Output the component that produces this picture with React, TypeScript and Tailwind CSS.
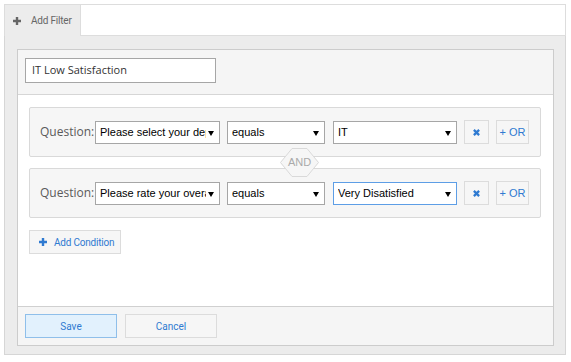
const BLUE = "#2f7ad1";

const PlusIcon = ({ color, size }: { color: string; size: number }) => (
  <svg width={size} height={size} viewBox="0 0 8 8">
    <path d="M4 0v8M0 4h8" stroke={color} strokeWidth="2.4" />
  </svg>
);

const TimesIcon = () => (
  <svg width="7" height="7" viewBox="0 0 8 8">
    <path d="M1 1l6 6M7 1l-6 6" stroke={BLUE} strokeWidth="2.6" />
  </svg>
);

const Select = ({
  text,
  width,
  focused,
}: {
  text: string;
  width: string;
  focused?: boolean;
}) => (
  <div
    className={`relative h-[23px] ${width} shrink-0 border ${
      focused ? "border-[#5d9ee6]" : "border-[#a6a6a6]"
    } bg-white flex items-center pl-[4px] pr-[13px] whitespace-nowrap font-['Liberation_Sans',Arial,sans-serif] text-[11px] text-black`}
  >
    <span className="flex-1 min-w-0 overflow-hidden">{text}</span>
    <span className="absolute right-[5px] top-[9px] w-0 h-0 border-l-[3px] border-r-[3px] border-t-[5px] border-l-transparent border-r-transparent border-t-black" />
  </div>
);

const Condition = ({
  question,
  value,
  focused,
}: {
  question: string;
  value: string;
  focused?: boolean;
}) => (
  <div className="h-[50px] w-[512px] border border-[#d9d9d9] rounded-[2px] bg-[#f6f6f6] flex items-center pl-[10px]">
    <span className="w-[55px] shrink-0 font-['Open_Sans',sans-serif] text-[12px] text-[#5a5a5a]">
      Question:
    </span>
    <Select text={question} width="w-[125px]" />
    <div className="w-[7px]" />
    <Select text="equals" width="w-[98px]" />
    <div className="w-[8px]" />
    <Select text={value} width="w-[124px]" focused={focused} />
    <div className="w-[7px]" />
    <button className="h-[24px] w-[25px] border border-[#dcdcdc] bg-[#f6f6f6] flex items-center justify-center">
      <TimesIcon />
    </button>
    <div className="w-[7px]" />
    <button
      className="h-[24px] w-[33px] border border-[#dcdcdc] bg-[#f6f6f6] flex items-center justify-center whitespace-nowrap font-['Liberation_Sans',Arial,sans-serif] text-[11px]"
      style={{ color: BLUE }}
    >
      + OR
    </button>
  </div>
);

export default function App() {
  return (
    <div className="w-[571px] h-[362px] bg-white pt-[4px] pl-[4px]">
      <div className="w-[562px]">
        <div className="flex h-[32px]">
          <div className="w-[76px] bg-[#ececec] border-l border-t border-[#dddddd] flex items-center pl-[8px] gap-[10px] whitespace-nowrap font-['Roboto',sans-serif] text-[10px] tracking-[-0.2px] text-[#666]">
            <PlusIcon color="#666" size={8} />
            <span>Add Filter</span>
          </div>
          <div className="flex-1 bg-white border border-[#dddddd]" />
        </div>
        <div className="h-[319px] bg-[#ececec] border-l border-r border-b border-[#d6d6d6] pt-[13px] px-[12px]">
          <div className="w-[537px] border border-[#cccccc] bg-white">
            <div className="h-[45px] bg-[#f5f5f5] border-b border-[#d6d6d6] pt-[8px] pl-[7px]">
              <div className="w-[191px] h-[25px] border border-[#a6a6a6] bg-white flex items-center pl-[6px] font-['Open_Sans',sans-serif] text-[11px] text-[#333]">
                IT Low Satisfaction
              </div>
            </div>
            <div className="h-[211px] pt-[12px] pl-[11px]">
              <Condition question="Please select your department" value="IT" />
              <div className="relative h-[11px]">
                <svg
                  className="absolute left-[251px] top-[-9px]"
                  width="39"
                  height="29"
                  viewBox="0 0 39 29"
                >
                  <polygon
                    points="0.5,14.5 12,0.5 27,0.5 38.5,14.5 27,28.5 12,28.5"
                    fill="#f6f6f6"
                    stroke="#d9d9d9"
                  />
                </svg>
                <span className="absolute left-[251px] top-[-9px] w-[39px] h-[29px] flex items-center justify-center font-['Liberation_Sans',Arial,sans-serif] text-[11px] text-[#aaa]">
                  AND
                </span>
              </div>
              <Condition question="Please rate your overall satisfaction" value="Very Disatisfied" focused />
              <button
                className="mt-[12px] h-[24px] w-[92px] border border-[#dcdcdc] bg-[#f6f6f6] flex items-center pl-[9px] gap-[7px] whitespace-nowrap font-['Roboto',sans-serif] text-[10px] tracking-[-0.2px]"
                style={{ color: BLUE }}
              >
                <PlusIcon color={BLUE} size={8} />
                <span>Add Condition</span>
              </button>
            </div>
            <div className="h-[39px] bg-[#f5f5f5] border-t border-[#d0d0d0] flex items-center pl-[7px] gap-[8px] font-['Roboto',sans-serif] text-[10px]">
              <button
                className="h-[24px] w-[92px] border border-[#8fbfea] bg-[#e2f1fd]"
                style={{ color: BLUE }}
              >
                Save
              </button>
              <button
                className="h-[24px] w-[92px] border border-[#dcdcdc] bg-[#f6f6f6]"
                style={{ color: BLUE }}
              >
                Cancel
              </button>
            </div>
          </div>
        </div>
      </div>
    </div>
  );
}
